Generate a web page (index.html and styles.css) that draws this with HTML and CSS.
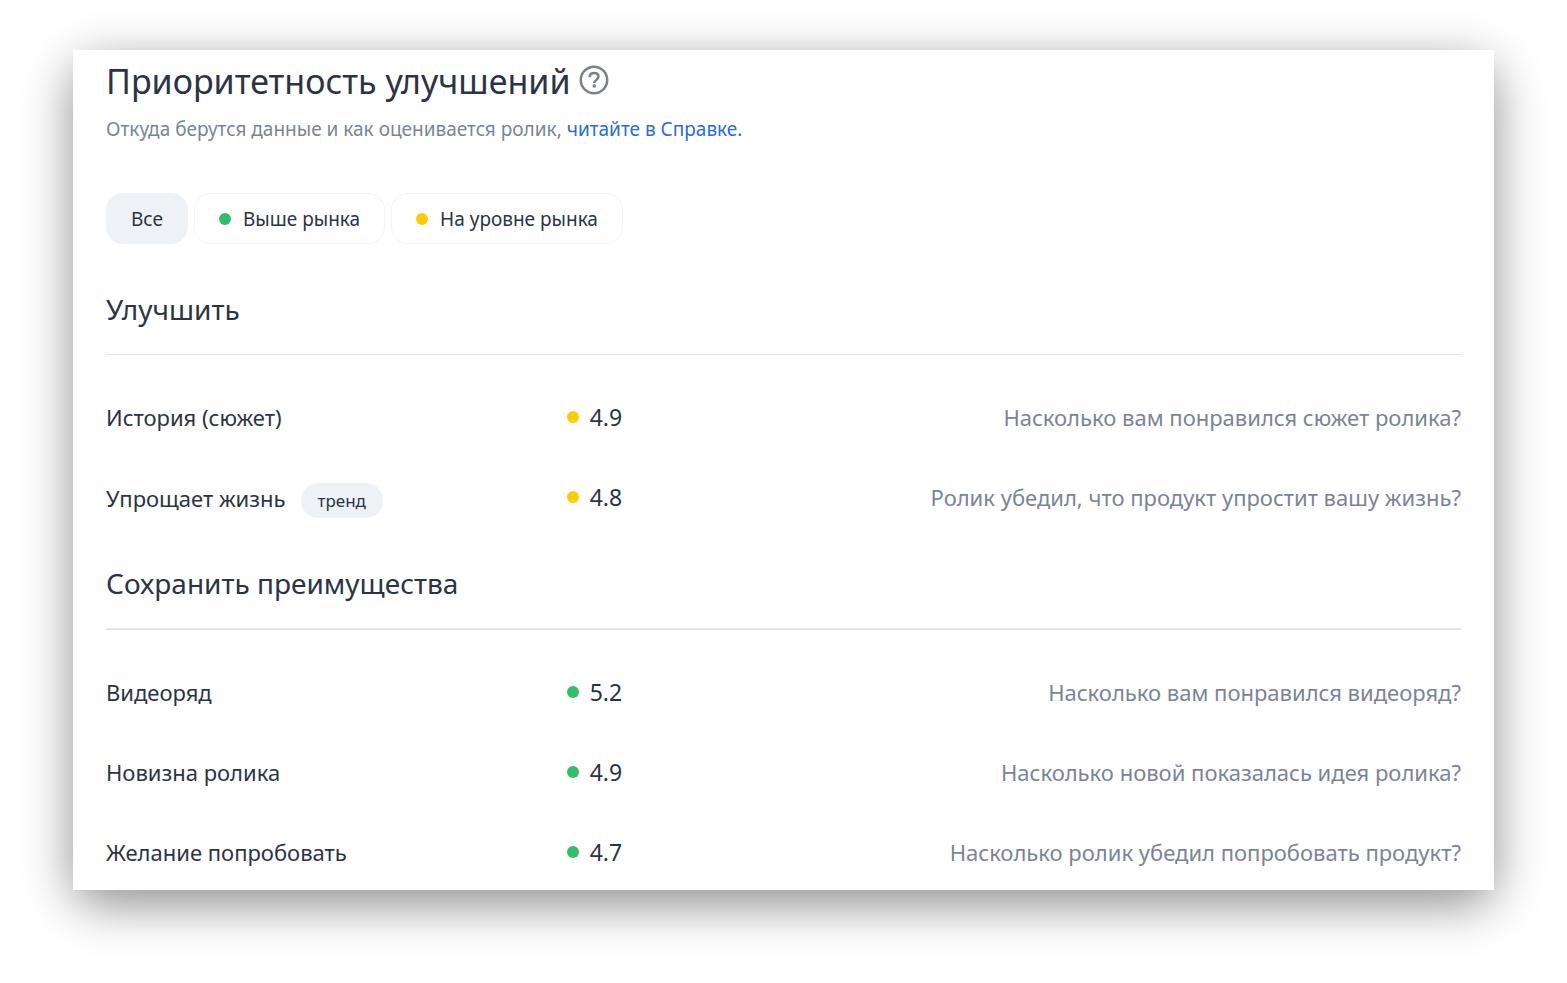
FILE: index.html
```html
<!DOCTYPE html>
<html lang="ru">
<head>
<meta charset="utf-8">
<title>Приоритетность улучшений</title>
<link rel="stylesheet" href="styles.css">
</head>
<body>
<main class="card">
  <header class="header">
    <h1 class="title">Приоритетность улучшений</h1>
    <button class="help" type="button" aria-label="Справка">
      <svg class="help-icon" viewBox="0 0 30 30" fill="none" aria-hidden="true">
        <circle cx="15" cy="15" r="13.2" stroke="currentColor" stroke-width="2.5"/>
        <path d="M10.600 12.200c.2-2.700 2-4.200 4.500-4.200 2.600 0 4.400 1.500 4.400 3.800 0 3.200-4.300 3.300-4.300 6.200" stroke="currentColor" stroke-width="2.500"/>
        <circle cx="15.200" cy="21" r="1.800" fill="currentColor"/>
      </svg>
    </button>
  </header>
  <p class="lead">Откуда берутся данные и как оценивается ролик, <a class="link" href="#help">читайте в Справке.</a></p>

  <div class="filters">
    <button class="filter filter-active" type="button">Все</button>
    <button class="filter" type="button"><span class="dot dot-green"></span>Выше рынка</button>
    <button class="filter" type="button"><span class="dot dot-yellow"></span>На уровне рынка</button>
  </div>

  <section>
    <h2 class="section-title" id="improve">Улучшить</h2>
    <table class="metrics" aria-labelledby="improve">
      <tr>
        <th class="name" scope="row">История (сюжет)</th>
        <td class="score"><span class="value"><span class="dot dot-yellow"></span>4.9</span></td>
        <td class="question">Насколько вам понравился сюжет ролика?</td>
      </tr>
      <tr>
        <th class="name" scope="row"><span class="tagged">Упрощает жизнь<span class="tag">тренд</span></span></th>
        <td class="score"><span class="value"><span class="dot dot-yellow"></span>4.8</span></td>
        <td class="question">Ролик убедил, что продукт упростит вашу жизнь?</td>
      </tr>
    </table>
  </section>

  <section class="section-keep">
    <h2 class="section-title" id="keep">Сохранить преимущества</h2>
    <table class="metrics" aria-labelledby="keep">
      <tr>
        <th class="name" scope="row">Видеоряд</th>
        <td class="score"><span class="value"><span class="dot dot-green"></span>5.2</span></td>
        <td class="question">Насколько вам понравился видеоряд?</td>
      </tr>
      <tr>
        <th class="name" scope="row">Новизна ролика</th>
        <td class="score"><span class="value"><span class="dot dot-green"></span>4.9</span></td>
        <td class="question">Насколько новой показалась идея ролика?</td>
      </tr>
      <tr>
        <th class="name" scope="row">Желание попробовать</th>
        <td class="score"><span class="value"><span class="dot dot-green"></span>4.7</span></td>
        <td class="question">Насколько ролик убедил попробовать продукт?</td>
      </tr>
    </table>
  </section>
</main>
</body>
</html>
```
FILE: styles.css
```css
* {
  box-sizing: border-box;
}

body {
  margin: 0;
  padding: 50px 73px 93px;
  background: #fff;
  color: #2b3445;
  font-family: "Noto Sans", "Open Sans", sans-serif;
  isolation: isolate;
}

.card {
  position: relative;
  padding: 7px 33px 0;
  background: #fff;
}

/* Soft shadow with rounded corners under the square card */
.card::before {
  content: "";
  position: absolute;
  inset: 0;
  z-index: -1;
  border-radius: 24px;
  background: #fff;
  box-shadow: 0 14px 50px rgba(0, 0, 0, 0.45);
}

.header {
  display: flex;
  align-items: center;
  gap: 8px;
}

.title {
  margin: 0;
  font-size: 34px;
  font-weight: 400;
  line-height: 48px;
}

.help {
  width: 30px;
  height: 30px;
  margin-bottom: 3px;
  padding: 0;
  border: 0;
  background: none;
  color: #7c7f8e;
}

.help-icon {
  display: block;
  width: 30px;
  height: 30px;
}

.lead {
  margin: 10px 0 0;
  color: #7b8497;
  font-size: 19px;
  line-height: 28px;
}

.link {
  color: #2a6bdc;
  text-decoration: none;
}

.filters {
  display: flex;
  flex-wrap: wrap;
  gap: 6px;
  margin-top: 50px;
}

.filter {
  display: flex;
  align-items: center;
  gap: 12px;
  height: 51px;
  padding: 0 24px;
  border: 1px solid #f2f4f8;
  border-radius: 17px;
  background: #fff;
  color: inherit;
  font: inherit;
  font-size: 19px;
}

.filter-active {
  border-color: #eef2f7;
  background: #eef2f7;
}

.dot {
  flex: none;
  width: 12px;
  height: 12px;
  border-radius: 50%;
}

.dot-green {
  background: #32bd6c;
}

.dot-yellow {
  background: #ffcc00;
}

.section-title {
  margin: 0 0 22px;
  padding: 44px 0 24px;
  border-bottom: 1px solid #e3e5e8;
  font-size: 28px;
  font-weight: 400;
  line-height: 42px;
}

.section-keep .section-title {
  padding-top: 25px;
  border-bottom-width: 2px;
}

.metrics {
  width: 100%;
  border-collapse: collapse;
  table-layout: fixed;
  font-size: 22px;
  line-height: 40px;
}

.metrics td,
.metrics th {
  height: 80px;
  padding: 20px 0 0;
  font-weight: 400;
  text-align: left;
  vertical-align: top;
  white-space: nowrap;
}

.section-keep tr:last-child > * {
  height: 78px;
}

.metrics .name {
  width: 34%;
}

.metrics .score {
  width: 10%;
  font-size: 23px;
}

.metrics .question {
  color: #7b8497;
  text-align: right;
}

.value {
  display: flex;
  align-items: center;
  gap: 11px;
}

.tagged {
  display: flex;
  align-items: center;
  gap: 15px;
}

.tag {
  margin-top: 6px;
  padding: 0 17px;
  border-radius: 18px;
  background: #eef2f7;
  font-size: 17px;
  line-height: 35px;
}
```
